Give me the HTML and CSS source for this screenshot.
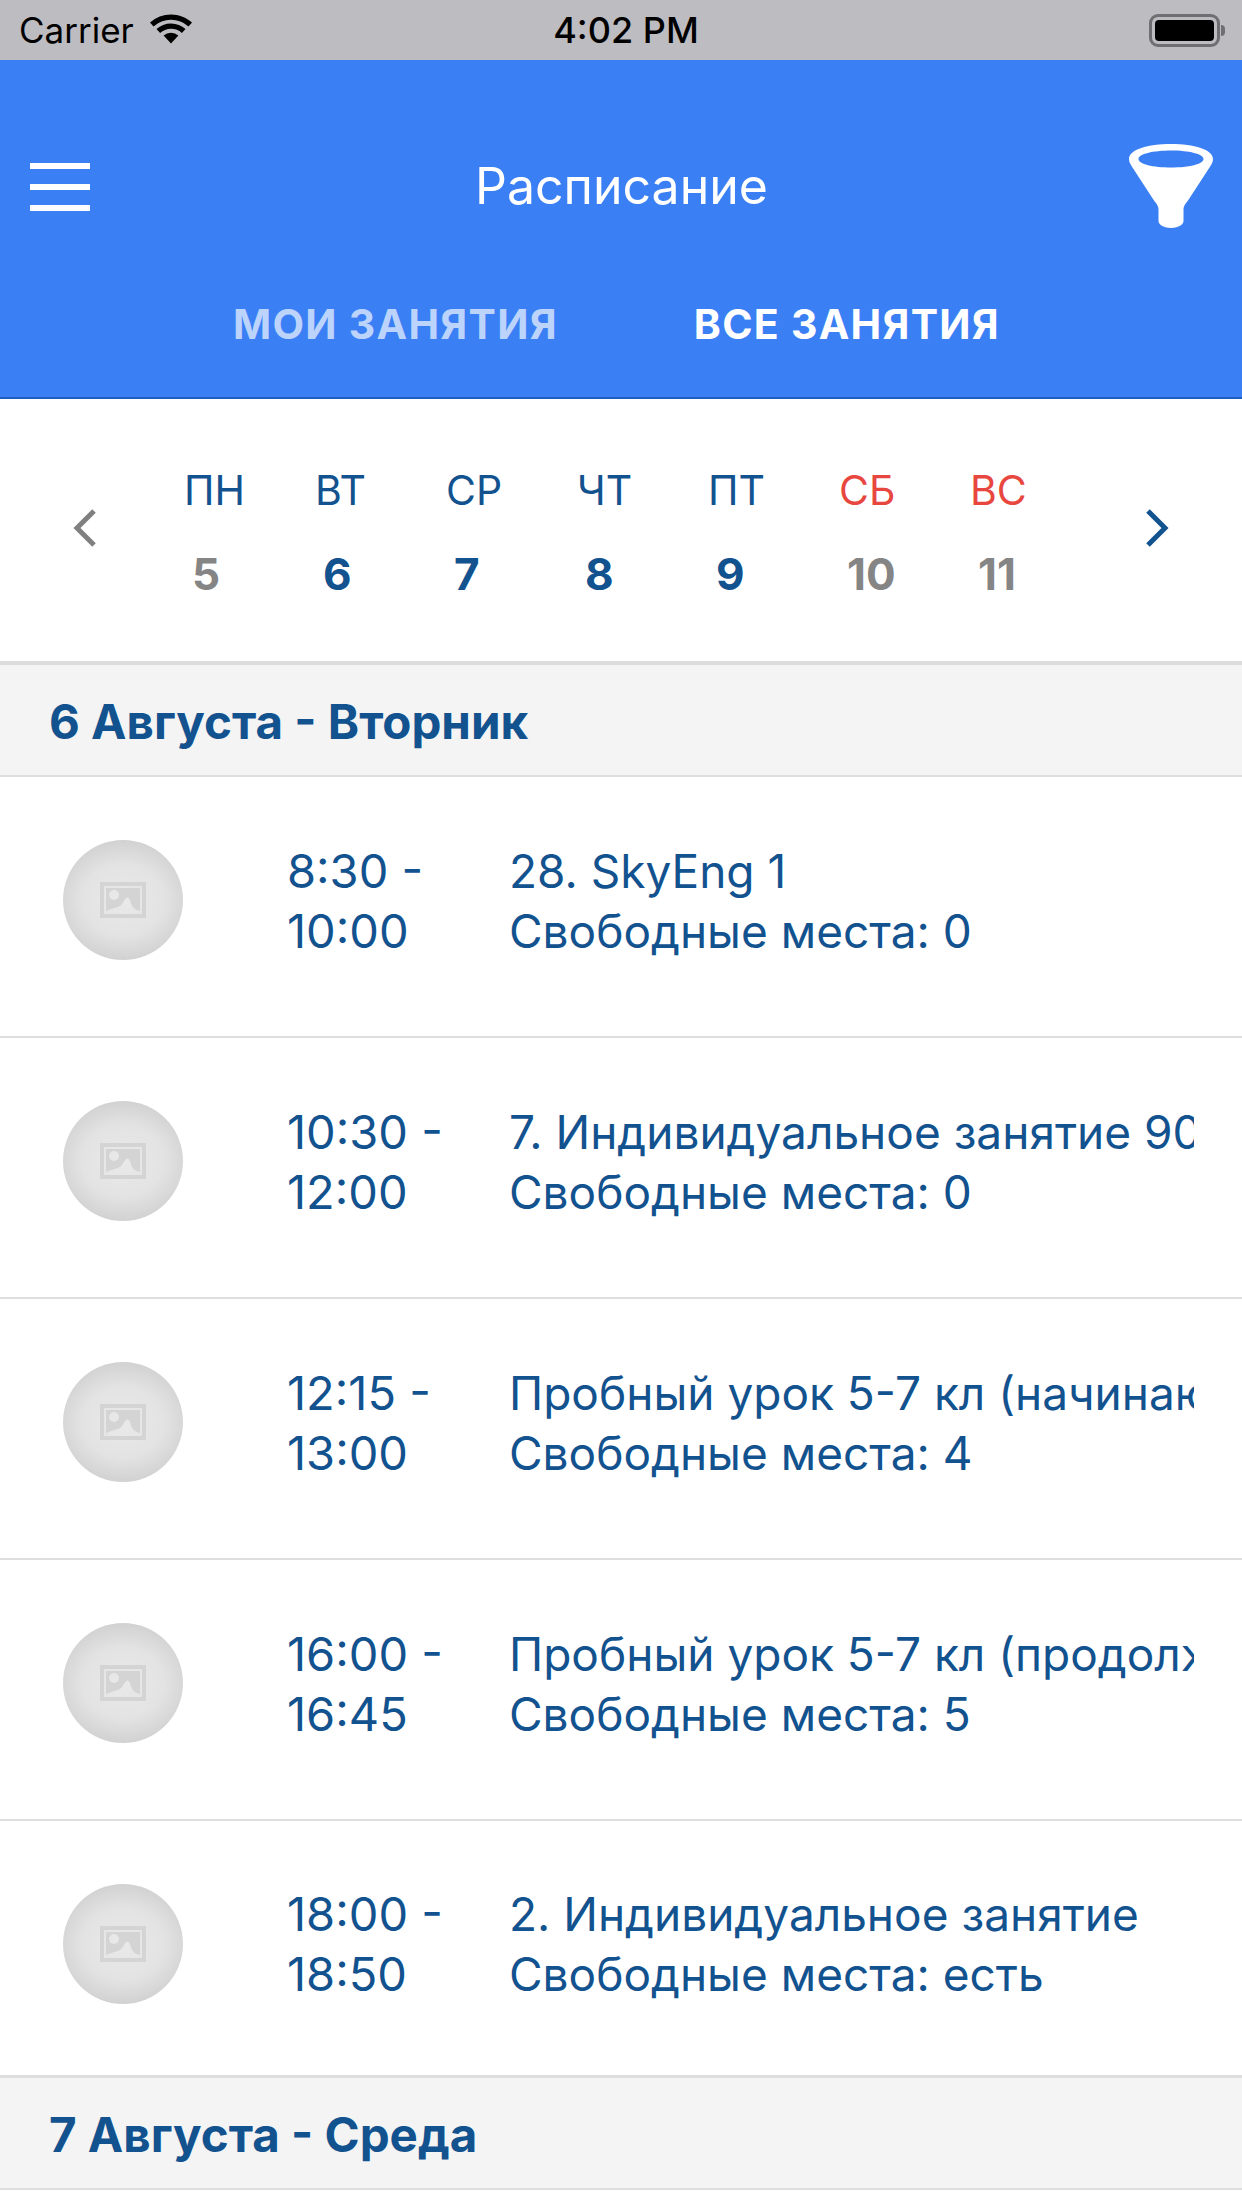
FILE: index.html
```html
<!DOCTYPE html>
<html lang="ru">
<head>
<meta charset="utf-8">
<title>Расписание</title>
<link rel="stylesheet" href="styles.css">
</head>
<body>
<div class="screen">
  <div class="status">
    <div class="status-left">
      <span class="carrier">Carrier</span>
      <svg class="wifi" width="42" height="30" viewBox="0 0 42 30"><path d="M21 29.5 13.6 21.6a11 11 0 0 1 14.8 0Z"/><path d="M21 9.5c5.6 0 10.6 2.1 14.5 5.6l-3.6 3.9A16.2 16.2 0 0 0 21 14.8c-4.200 0-8 1.600-10.900 4.200l-3.600-3.900A21.500 21.500 0 0 1 21 9.500Z"/><path d="M21 .5c8.100 0 15.400 3.100 21 8.100l-3.500 3.800A26.800 26.800 0 0 0 21 5.800 26.800 26.800 0 0 0 3.500 12.400L0 8.600A31.300 31.300 0 0 1 21 .5Z"/></svg>
    </div>
    <span class="clock">4:02 PM</span>
    <div class="battery"><span class="battery-body"><span class="battery-fill"></span></span><span class="battery-cap"></span></div>
  </div>

  <header class="header">
    <div class="topbar">
      <div class="burger"><span></span><span></span><span></span></div>
      <h1 class="title">Расписание</h1>
      <svg class="funnel" width="84" height="84" viewBox="0 0 84 84"><path fill-rule="evenodd" fill="#fff" d="M42 0C65 0 84 5.500 84 15c0 3-1.500 5.500-3.500 8.500L60 55c-4 5.500-5.500 7-5.500 11v11c0 4-6 7-12.500 7s-12.500-3-12.500-7V66c0-4-1.500-5.500-5.500-11L3.500 23.500C1.500 20.500 0 18 0 15 0 5.500 19 0 42 0Zm0 6.500C24 6.500 9.500 10 9.500 15S24 23.500 42 23.500 74.500 20 74.500 15 60 6.500 42 6.500Z"/></svg>
    </div>
    <nav class="tabs">
      <span class="tab tab-muted">МОИ ЗАНЯТИЯ</span>
      <span class="tab">ВСЕ ЗАНЯТИЯ</span>
    </nav>
  </header>

  <section class="week">
    <svg class="chevron" width="24" height="38" viewBox="0 0 24 38"><path d="M21 2 4 19l17 17" fill="none" stroke="#808080" stroke-width="5"/></svg>
    <div class="days">
      <div class="day"><span class="dow">ПН</span><span class="num off">5</span></div>
      <div class="day"><span class="dow">ВТ</span><span class="num">6</span></div>
      <div class="day"><span class="dow">СР</span><span class="num">7</span></div>
      <div class="day"><span class="dow">ЧТ</span><span class="num">8</span></div>
      <div class="day"><span class="dow">ПТ</span><span class="num">9</span></div>
      <div class="day"><span class="dow red">СБ</span><span class="num off">10</span></div>
      <div class="day"><span class="dow red">ВС</span><span class="num off">11</span></div>
    </div>
    <svg class="chevron" width="24" height="38" viewBox="0 0 24 38"><path d="M3 2l17 17L3 36" fill="none" stroke="#12528f" stroke-width="5"/></svg>
  </section>

  <h2 class="date">6 Августа - Вторник</h2>

  <div class="row">
    <div class="avatar"><svg class="ph" width="46" height="36" viewBox="0 0 46 36"><path fill-rule="evenodd" d="M0 0h46v36H0Zm4 4v28h38V4Z"/><path d="M6 6h34v23c-5-1-8-3-10-11-2-4-4-3-6 1-2 3-3 5-6 6-4 1-8 2-12 4Zm8 2a5 5 0 1 0 0 10 5 5 0 0 0 0-10Z"/></svg></div>
    <div class="time">8:30 -<br>10:00</div>
    <div class="info"><div class="line">28. SkyEng 1</div><div class="line">Свободные места: 0</div></div>
  </div>
  <div class="row">
    <div class="avatar"><svg class="ph" width="46" height="36" viewBox="0 0 46 36"><path fill-rule="evenodd" d="M0 0h46v36H0Zm4 4v28h38V4Z"/><path d="M6 6h34v23c-5-1-8-3-10-11-2-4-4-3-6 1-2 3-3 5-6 6-4 1-8 2-12 4Zm8 2a5 5 0 1 0 0 10 5 5 0 0 0 0-10Z"/></svg></div>
    <div class="time">10:30 -<br>12:00</div>
    <div class="info"><div class="line">7. Индивидуальное занятие 90 мин</div><div class="line">Свободные места: 0</div></div>
  </div>
  <div class="row">
    <div class="avatar"><svg class="ph" width="46" height="36" viewBox="0 0 46 36"><path fill-rule="evenodd" d="M0 0h46v36H0Zm4 4v28h38V4Z"/><path d="M6 6h34v23c-5-1-8-3-10-11-2-4-4-3-6 1-2 3-3 5-6 6-4 1-8 2-12 4Zm8 2a5 5 0 1 0 0 10 5 5 0 0 0 0-10Z"/></svg></div>
    <div class="time">12:15 -<br>13:00</div>
    <div class="info"><div class="line">Пробный урок 5-7 кл (начинающие)</div><div class="line">Свободные места: 4</div></div>
  </div>
  <div class="row">
    <div class="avatar"><svg class="ph" width="46" height="36" viewBox="0 0 46 36"><path fill-rule="evenodd" d="M0 0h46v36H0Zm4 4v28h38V4Z"/><path d="M6 6h34v23c-5-1-8-3-10-11-2-4-4-3-6 1-2 3-3 5-6 6-4 1-8 2-12 4Zm8 2a5 5 0 1 0 0 10 5 5 0 0 0 0-10Z"/></svg></div>
    <div class="time">16:00 -<br>16:45</div>
    <div class="info"><div class="line">Пробный урок 5-7 кл (продолжающие)</div><div class="line">Свободные места: 5</div></div>
  </div>
  <div class="row row-last">
    <div class="avatar"><svg class="ph" width="46" height="36" viewBox="0 0 46 36"><path fill-rule="evenodd" d="M0 0h46v36H0Zm4 4v28h38V4Z"/><path d="M6 6h34v23c-5-1-8-3-10-11-2-4-4-3-6 1-2 3-3 5-6 6-4 1-8 2-12 4Zm8 2a5 5 0 1 0 0 10 5 5 0 0 0 0-10Z"/></svg></div>
    <div class="time">18:00 -<br>18:50</div>
    <div class="info"><div class="line">2. Индивидуальное занятие</div><div class="line">Свободные места: есть</div></div>
  </div>

  <h2 class="date">7 Августа - Среда</h2>
</div>
</body>
</html>
```
FILE: styles.css
```css
* { box-sizing: border-box; }
html, body { margin: 0; padding: 0; }
body { background: #fff; font-family: Inter, "Liberation Sans", sans-serif; color: #12528f; }
.screen { width: 1242px; height: 2208px; overflow: hidden; background: #fff; }

.status { height: 60px; background: #bdbcc0; display: grid; grid-template-columns: 1fr auto 1fr; align-items: center; padding: 0 17px 0 19px; color: #000; }
.status-left { display: flex; align-items: center; gap: 16px; }
.carrier { font-size: 35px; font-weight: 400; }
.wifi { fill: #000; margin-top: -3px; }
.clock { font-size: 36px; font-weight: 500; line-height: 40px; margin-left: 8px; }
.battery { display: flex; align-items: center; gap: 1px; justify-self: end; }
.battery-body { width: 71px; height: 33px; border: 3px solid #6f6f72; border-radius: 9px; padding: 3px; display: block; }
.battery-fill { display: block; width: 100%; height: 100%; background: #000; border-radius: 4px; }
.battery-cap { width: 4px; height: 11px; background: #6f6f72; border-radius: 0 6px 6px 0; }

.header { height: 339px; background: #3b7ff5; border-bottom: 2px solid #1d5fc0; display: flex; flex-direction: column; }
.topbar { height: 204px; padding: 48px 29px 0 30px; display: grid; grid-template-columns: 1fr auto 1fr; align-items: center; }
.burger { width: 60px; display: flex; flex-direction: column; gap: 15px; margin-top: 2px; }
.burger span { display: block; height: 6px; background: #fff; }
.title { margin: 0; font-size: 50px; font-weight: 400; line-height: 56px; color: #fff; }
.funnel { justify-self: end; }
.tabs { display: flex; gap: 136px; justify-content: center; padding-right: 9px; margin-top: 36px; }
.tab { font-size: 41px; font-weight: 700; line-height: 48px; color: #fff; letter-spacing: 1.26px; }
.tab-muted { color: #bcd3fb; }

.week { height: 266px; display: flex; align-items: center; padding: 0 0 0 73px; border-bottom: 4px solid #dcdcdc; }
.chevron { margin-bottom: 5px; }
.days { display: flex; margin: 3px 44px 0 87px; }
.day { width: 131px; display: flex; flex-direction: column; align-items: flex-start; gap: 38px; }
.dow { font-size: 41px; line-height: 46px; }
.red { color: #e8473f; }
.num { font-size: 44px; line-height: 46px; font-weight: 700; margin-left: 8px; }
.off { color: #858585; }

.date { margin: 0; height: 112px; padding: 2px 0 0 49px; background: #f4f4f4; border-bottom: 2px solid #dedede; font-size: 47.5px; font-weight: 700; line-height: 110px; color: #12528f; }

.row { height: 261px; display: flex; align-items: center; padding: 0 48px 13px 63px; border-bottom: 2px solid #dedede; font-size: 46px; line-height: 60px; }
.row-last { height: 257px; border-bottom: 3px solid #dedede; padding-bottom: 9px; }
.avatar { flex: none; width: 120px; height: 120px; border-radius: 50%; background: radial-gradient(ellipse 62% 54% at 50% 50%, #e9e9e9 0%, #e3e3e3 55%, #cecece 100%); display: flex; align-items: center; justify-content: center; }
.ph { fill: #d4d4d4; }
.time { flex: none; width: 222px; margin-left: 104px; font-size: 47px; padding-top: 1px; }
.info { flex: 1; min-width: 0; overflow: hidden; padding-top: 1px; }
.line { white-space: nowrap; }
```
